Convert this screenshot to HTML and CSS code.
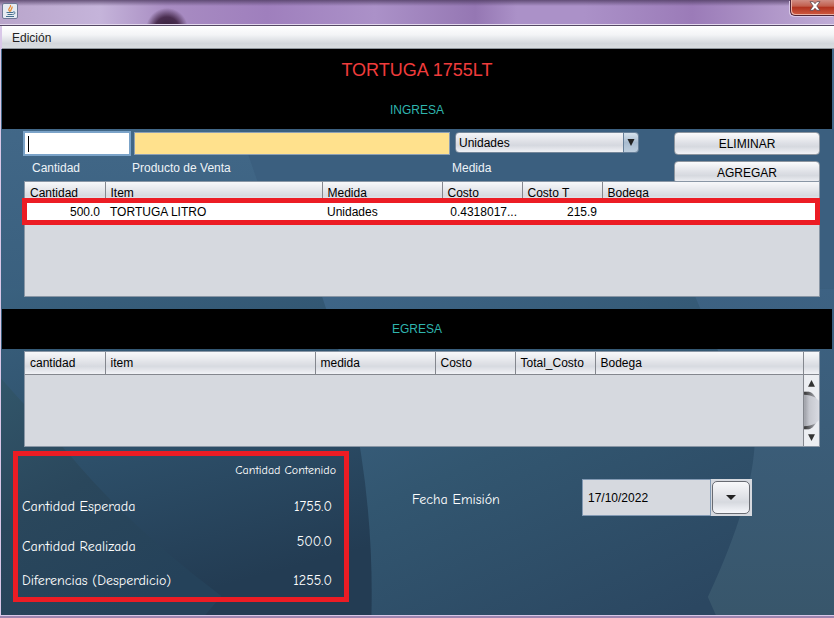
FILE: index.html
```html
<!DOCTYPE html>
<html lang="es">
<head>
<meta charset="utf-8">
<title>Tortuga 1755LT</title>
<link rel="stylesheet" href="styles.css">
</head>
<body>
<div class="window">
  <header class="titlebar">
    <svg class="java-icon" viewBox="0 0 16 16" aria-hidden="true">
      <rect x=".5" y=".5" width="15" height="15" rx="1.5" fill="#e6ebf2" stroke="#6f7896"/>
      <path d="M8 8.500C4.500 6 9.500 4.500 8.500 2M9 8.500C7.500 7 11 5.500 10 3.500" fill="none" stroke="#e8872e" stroke-width="1.200"/>
      <path d="M4.500 9.500h6.500M5.500 11.500h5M4 13.500h8" fill="none" stroke="#46708f" stroke-width="1"/>
      <path d="M11 9c3-.8 2.500 2.500-.5 2.500" fill="none" stroke="#46708f"/>
    </svg>
    <button class="close" aria-label="Cerrar">
      <svg viewBox="0 0 12 10" aria-hidden="true"><path d="M1 .7h3.200L6 2.700 7.800.7H11L7.800 5 11 9.300H7.800L6 7.300 4.200 9.300H1L4.200 5z" fill="#fff" stroke="#5b4650" stroke-width=".8"/></svg>
    </button>
  </header>
  <nav class="menubar"><button class="menu">Edición</button></nav>
  <main class="content">
    <svg class="backdrop" viewBox="0 0 832 567" preserveAspectRatio="none" aria-hidden="true">
      <defs>
        <linearGradient id="base" x1="0" y1="0" x2="0" y2="1"><stop offset="0" stop-color="#456b8c"/><stop offset=".5" stop-color="#385e7c"/><stop offset="1" stop-color="#2c4962"/></linearGradient>
        <linearGradient id="mid" x1="0" y1="0" x2=".7" y2="1"><stop offset="0" stop-color="#3f6688"/><stop offset=".5" stop-color="#325670"/><stop offset="1" stop-color="#2b4761"/></linearGradient>
        <linearGradient id="left" x1="0" y1="0" x2=".3" y2="1"><stop offset="0" stop-color="#3a617f"/><stop offset=".55" stop-color="#2d4f69"/><stop offset="1" stop-color="#233c53"/></linearGradient>
        <linearGradient id="corner" x1="0" y1="0" x2=".5" y2="1"><stop offset="0" stop-color="#32566a"/><stop offset=".5" stop-color="#2a475c"/><stop offset="1" stop-color="#25425a"/></linearGradient>
        <linearGradient id="right" x1="0" y1="0" x2="0" y2="1"><stop offset="0" stop-color="#3d6283"/><stop offset="1" stop-color="#38566b"/></linearGradient>
      </defs>
      <path d="M0 0h832v567H0z" fill="url(#base)"/>
      <path d="M238 80 256 132 320 260H832V80z" fill="#3b5f7f"/>
      <path d="M318 240H832V567H320z" fill="url(#mid)"/>
      <path d="M0 240H318Q374 400 370 567H0z" fill="url(#left)"/>
      <path d="M0 330 68 406Q130 480 220 548L204 567H0z" fill="url(#corner)"/>
      <path d="M690 240H832V567H714L706 549Q752 450 753 390z" fill="url(#right)"/>
    </svg>
    <section class="band band-title">
      <h1>TORTUGA 1755LT</h1>
      <h2>INGRESA</h2>
    </section>
    <form class="entry">
      <input id="cantidad" class="field qty" type="text">
      <input id="producto" class="field product" type="text">
      <div class="combo">
        <select id="medida"><option>Unidades</option></select>
        <svg class="combo-arrow" viewBox="0 0 16 20" aria-hidden="true"><path d="M4 6h8l-4 8z" fill="#222"/></svg>
      </div>
      <button type="button" class="action">ELIMINAR</button>
      <label class="qty-label" for="cantidad">Cantidad</label>
      <label for="producto">Producto de Venta</label>
      <label for="medida">Medida</label>
      <button type="button" class="action second">AGREGAR</button>
    </form>
    <div class="pane pane-in">
      <table>
        <colgroup><col class="c80"><col class="c217"><col class="c120"><col class="c80"><col class="c80"><col></colgroup>
        <thead><tr><th>Cantidad</th><th>Item</th><th>Medida</th><th>Costo</th><th>Costo T</th><th>Bodega</th></tr></thead>
        <tbody><tr><td class="num">500.0</td><td>TORTUGA LITRO</td><td>Unidades</td><td class="num">0.4318017...</td><td class="num">215.9</td><td></td></tr></tbody>
      </table>
    </div>
    <section class="band band-out"><h2>EGRESA</h2></section>
    <div class="pane pane-out">
      <table>
        <colgroup><col class="c80"><col class="c210"><col class="c120"><col class="c80"><col class="c80"><col><col class="c16"></colgroup>
        <thead><tr><th>cantidad</th><th>item</th><th>medida</th><th>Costo</th><th>Total_Costo</th><th>Bodega</th><th></th></tr></thead>
      </table>
      <div class="scrollbar">
        <svg viewBox="0 0 15 72" aria-hidden="true">
          <defs><linearGradient id="thumb"><stop offset="0" stop-color="#9b9da4"/><stop offset=".35" stop-color="#c6c8cf"/><stop offset="1" stop-color="#d8dae1"/></linearGradient>
          <linearGradient id="edge"><stop offset="0" stop-color="#333"/><stop offset="1" stop-color="#a9abb2"/></linearGradient></defs>
          <path d="M0 0h15v72H0z" fill="#eceef2"/>
          <path d="M4 12h7L7.500 5z M4 60h7L7.500 67z" fill="#333"/>
          <path d="M0 17h5c5 1 6 6 10 9v20c-4 3-5 8-10 9H0z" fill="url(#thumb)"/>
          <path d="M0 17h5c4 1 5 4 7 6-4-2-8-3-12-3zM0 55h5c4-1 5-4 7-6-4 2-8 3-12 3z" fill="url(#edge)"/>
        </svg>
      </div>
    </div>
    <section class="footer">
      <div class="summary">
        <span class="head">Cantidad Contenido</span>
        <span>Cantidad Esperada</span><span class="value">1755.0</span>
        <span>Cantidad Realizada</span><span class="value raised">500.0</span>
        <span>Diferencias (Desperdicio)</span><span class="value">1255.0</span>
      </div>
      <label class="date-label" for="fecha">Fecha Emisión</label>
      <div class="date">
        <input id="fecha" type="text" value="17/10/2022">
        <div class="date-side"><button type="button" aria-label="Elegir fecha"><svg viewBox="0 0 10 6" aria-hidden="true"><path d="M0 0h10L5 5z" fill="#222"/></svg></button></div>
      </div>
    </section>
  </main>
</div>
</body>
</html>
```
FILE: styles.css
```css
*, ::before, ::after { box-sizing: border-box; }
body { margin: 0; font: 12px/16px "Liberation Sans", Arial, sans-serif; color: #000; }
button, input, select { font: inherit; color: inherit; }
h1, h2 { margin: 0; font-weight: 400; }

.window {
  display: flex;
  flex-direction: column;
  min-height: 100vh;
  border-bottom: 2px solid #9d83ae;
  background: #d9c8e8;
}
.titlebar {
  display: flex;
  justify-content: space-between;
  height: 26px;
  padding-left: 2px;
  border-bottom: 1px solid #554964;
  box-shadow: inset 0 -1px #e4d9ee;
  background:
    radial-gradient(circle at 167px 29px, #352039 0, #4a2e50 12px, transparent 21px),
    linear-gradient(#4f3c62cc, transparent 6px),
    linear-gradient(90deg, #b9a5cb, #c5b4da 12%, #a88cc2 20%, #9f7fbd 32%, #ab91c8 45%, #9577b3 57%, #ab91c8 62%, #ab91c8 70%, #9b7bb8 83%, #c0acd6);
}
.java-icon { width: 16px; height: 16px; margin-top: 3px; }
.close {
  width: 44px;
  height: 16px;
  padding: 0 0 0 5px;
  border: 1px solid #4e2436;
  border-width: 0 0 1px 1px;
  border-radius: 0 0 0 5px;
  box-shadow: inset 1px -1px #eab0a4, -1px 1px #d9c8e6;
  background: linear-gradient(#d08c83, #c2604f 40%, #b23421 50%, #cf5a40);
}
.close svg { display: block; width: 12px; height: 10px; margin: 0 auto 3px; }
.menubar {
  height: 23px;
  margin-left: 2px;
  border-bottom: 1px solid #8e959c;
  background: linear-gradient(#fff, #f3f4f6 40%, #d3d7dc 80%, #d9dde0);
}
.menu { height: 23px; padding: 0 10px; border: 0; background: none; color: #222; }

.content {
  position: relative;
  z-index: 0;
  flex: 1;
  margin-left: 1px;
  margin-bottom: 1px;
  padding-left: 1px;
  background: #385e7c;
}
.backdrop { position: absolute; z-index: -1; inset: 0; width: 100%; height: 100%; }
.band { margin-right: 2px; background: #000; color: #2fb5ae; text-align: center; }
.band h1 { padding-top: 9px; font-size: 18px; line-height: 24px; color: #f03c3c; }
.band h2 { font-size: 12px; line-height: 40px; }
.band-title { height: 80px; }
.band-title h2 { margin-top: 8px; }

.entry {
  display: grid;
  grid-template-columns: 108px 1fr 222px 146px;
  grid-template-rows: 26px 23px;
  height: 52px;
  padding: 3px 14px 0 22px;
  overflow: hidden;
  color: #eef3f7;
}
.entry label { line-height: 20px; }
.entry .qty-label { padding-left: 8px; }
.field { width: auto; min-width: 0; border: 1px solid #8ea0b4; color: #000; }
.qty {
  height: 23px;
  margin-right: 2px;
  outline: 2px solid #7ba3c8;
  outline-offset: -1px;
  background: linear-gradient(#000, #000) 3px 3px / 1px 16px no-repeat #fff;
}
.product { height: 23px; margin: 0 2px; background: #ffe18d; }
.combo { position: relative; width: 184px; height: 21px; margin-left: 3px; color: #000; }
.combo select {
  display: block;
  width: 100%;
  height: 100%;
  padding: 0 20px 0 3px;
  border: 1px solid #75879a;
  border-radius: 4px;
  appearance: none;
  background: linear-gradient(#f4f5f8, #dcdee4 50%, #d5d8df 65%, #f0f1f5);
}
.combo-arrow {
  position: absolute;
  top: 0;
  right: 0;
  width: 16px;
  height: 21px;
  border: 1px solid #667f99;
  border-radius: 0 4px 4px 0;
  background: linear-gradient(#d6e2ed, #a8bbcf 50%, #bdcede);
  pointer-events: none;
}
.action {
  height: 23px;
  padding: 0;
  border: 1px solid #8d959f;
  border-radius: 4px;
  background: linear-gradient(#fbfbfc, #dddfe5 50%, #d6d9df 65%, #f2f3f7);
  color: #000;
}
.second { margin-top: 3px; }

.pane {
  position: relative;
  margin: 0 14px 0 22px;
  border: 1px solid #8996a5;
  background: #d6d9df;
}
.pane-in { height: 116px; margin-bottom: 12px; }
.pane-out { display: grid; grid-template-rows: 23px 1fr; height: 96px; margin-top: 2px; }
.pane-in::after {
  content: "";
  position: absolute;
  inset: 16px -1px auto -3px;
  height: 27px;
  border: 5px solid #ec1c24;
}
table { width: 100%; table-layout: fixed; border-collapse: collapse; }
th, td { padding: 0 5px; font-weight: 400; text-align: left; white-space: nowrap; overflow: hidden; }
th {
  height: 21px;
  border-right: 1px solid #84878e;
  background: linear-gradient(#f7f8fa, #dfe1e6 50%, #d7dae0 65%, #f1f2f6);
}
th:last-child { border-right: 0; }
.pane-out th { height: 22px; border-bottom: 1px solid #84878e; }
td { height: 18px; background: #fff; }
.num { text-align: right; }
.c80 { width: 80px; }
.c120 { width: 120px; }
.c210 { width: 210px; }
.c217 { width: 217px; }
.c16 { width: 16px; }
.scrollbar { width: 16px; margin-left: auto; border-left: 1px solid #84878e; }
.scrollbar svg { display: block; width: 15px; height: 71px; }

.footer {
  display: grid;
  grid-template-columns: 336px 170px auto;
  justify-content: start;
  column-gap: 63px;
  padding: 4px 0 13px 11px;
  font-family: "Comic Sans MS", "Comic Neue", Lato, sans-serif;
  font-size: 14px;
  color: #fff;
}
.summary {
  display: grid;
  grid-template-columns: 1fr auto;
  grid-template-rows: 28px 46px 34px 33px;
  align-items: center;
  padding: 0 12px 0 4px;
  border: 5px solid #ec1c24;
}
.head { grid-column: 1 / -1; justify-self: end; margin-right: -4px; font-size: 12px; }
.value { text-align: right; }
.raised { padding-bottom: 10px; }
.date-label { margin-top: 41px; }
.date { display: flex; height: 37px; margin-top: 28px; margin-left: -63px; }
.date input {
  width: 129px;
  padding: 0 5px;
  border: 1px solid #8299b3;
  background: #d6d9df;
  font: 12px/16px "Liberation Sans", Arial, sans-serif;
  color: #000;
}
.date-side { width: 41px; padding: 2px 2px 2px 1px; background: #d6d9df; }
.date-side button {
  display: grid;
  place-items: center;
  width: 38px;
  height: 33px;
  padding: 0;
  border: 1px solid #686b72;
  border-radius: 5px;
  background: linear-gradient(#f8f8fa, #dfe1e6 50%, #d6d9df 65%, #f6f7fb);
}
.date-side svg { width: 10px; height: 6px; }
```
